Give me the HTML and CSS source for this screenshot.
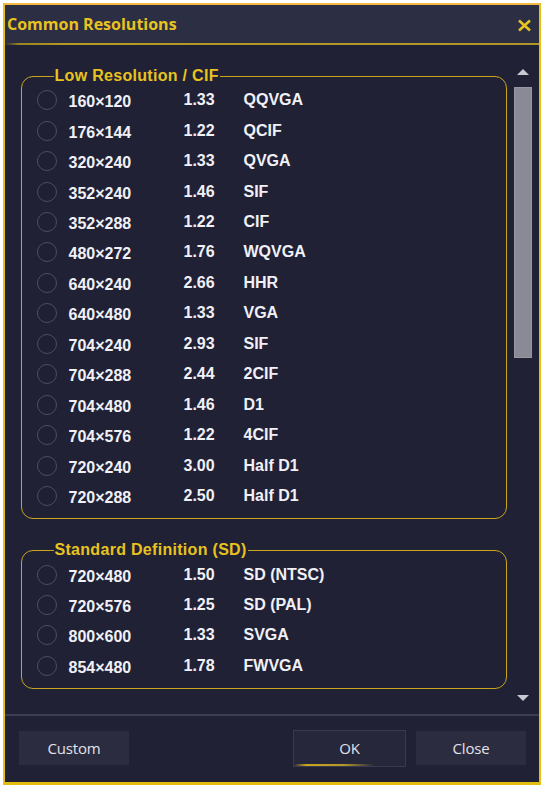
FILE: index.html
```html
<!DOCTYPE html>
<html>
<head>
<meta charset="utf-8">
<link rel="stylesheet" href="styles.css">
</head>
<body>
<div class="dialog">
  <div class="titlebar">
    <span class="title">Common Resolutions</span>
    <svg class="close-x" width="15" height="13" viewBox="0 0 15 13"><path d="M2 1.5 L13 11.5 M13 1.5 L2 11.5" stroke="#e8c31f" stroke-width="2.6" stroke-linecap="butt"/></svg>
  </div>
  <div class="title-sep"></div>
  <div class="content">
    <div class="scroll-area">
      <fieldset class="group">
        <legend>Low Resolution / CIF</legend>
        <div class="row"><span class="radio"></span><span class="res">160×120</span><span class="ar">1.33</span><span class="nm">QQVGA</span></div>
        <div class="row"><span class="radio"></span><span class="res">176×144</span><span class="ar">1.22</span><span class="nm">QCIF</span></div>
        <div class="row"><span class="radio"></span><span class="res">320×240</span><span class="ar">1.33</span><span class="nm">QVGA</span></div>
        <div class="row"><span class="radio"></span><span class="res">352×240</span><span class="ar">1.46</span><span class="nm">SIF</span></div>
        <div class="row"><span class="radio"></span><span class="res">352×288</span><span class="ar">1.22</span><span class="nm">CIF</span></div>
        <div class="row"><span class="radio"></span><span class="res">480×272</span><span class="ar">1.76</span><span class="nm">WQVGA</span></div>
        <div class="row"><span class="radio"></span><span class="res">640×240</span><span class="ar">2.66</span><span class="nm">HHR</span></div>
        <div class="row"><span class="radio"></span><span class="res">640×480</span><span class="ar">1.33</span><span class="nm">VGA</span></div>
        <div class="row"><span class="radio"></span><span class="res">704×240</span><span class="ar">2.93</span><span class="nm">SIF</span></div>
        <div class="row"><span class="radio"></span><span class="res">704×288</span><span class="ar">2.44</span><span class="nm">2CIF</span></div>
        <div class="row"><span class="radio"></span><span class="res">704×480</span><span class="ar">1.46</span><span class="nm">D1</span></div>
        <div class="row"><span class="radio"></span><span class="res">704×576</span><span class="ar">1.22</span><span class="nm">4CIF</span></div>
        <div class="row"><span class="radio"></span><span class="res">720×240</span><span class="ar">3.00</span><span class="nm">Half D1</span></div>
        <div class="row"><span class="radio"></span><span class="res">720×288</span><span class="ar">2.50</span><span class="nm">Half D1</span></div>
      </fieldset>
      <fieldset class="group group-sd">
        <legend>Standard Definition (SD)</legend>
        <div class="row"><span class="radio"></span><span class="res">720×480</span><span class="ar">1.50</span><span class="nm">SD (NTSC)</span></div>
        <div class="row"><span class="radio"></span><span class="res">720×576</span><span class="ar">1.25</span><span class="nm">SD (PAL)</span></div>
        <div class="row"><span class="radio"></span><span class="res">800×600</span><span class="ar">1.33</span><span class="nm">SVGA</span></div>
        <div class="row"><span class="radio"></span><span class="res">854×480</span><span class="ar">1.78</span><span class="nm">FWVGA</span></div>
      </fieldset>
    </div>
    <div class="scrollbar">
      <span class="arrow-up"></span>
      <span class="thumb"></span>
      <span class="spacer"></span>
      <span class="arrow-down"></span>
    </div>
  </div>
  <div class="footer-sep"></div>
  <div class="footer">
    <button class="btn btn-custom">Custom</button>
    <span class="spacer"></span>
    <button class="btn btn-ok">OK</button>
    <button class="btn btn-close">Close</button>
  </div>
</div>
</body>
</html>
```
FILE: styles.css
```css
html, body {
  margin: 0;
  padding: 0;
  background: #ffffff;
}
body {
  padding: 3px 0 0 3px;
}
.dialog {
  box-sizing: border-box;
  width: 538px;
  height: 782px;
  border-top: 2px solid #f4b843;
  border-left: 2px solid #e9bd22;
  border-right: 2px solid #e6bf14;
  border-bottom: 3px solid #e2bd10;
  background: #202135;
  display: flex;
  flex-direction: column;
}
.titlebar {
  height: 38px;
  background: #2c2e43;
  display: flex;
  align-items: center;
  justify-content: space-between;
  padding: 0 7px 0 2px;
  flex: none;
}
.title {
  font-family: "Open Sans", "Noto Sans", sans-serif;
  font-weight: 700;
  font-size: 16px;
  color: #e8c31f;
}
.close-x {
  display: block;
  margin-top: 2px;
}
.title-sep {
  height: 2px;
  flex: none;
  background: linear-gradient(to right, #2a2b3a 0px, #9c8420 14px, #b59a22 60px, #b0962a 100%);
}
.content {
  flex: none;
  height: 669px;
  display: flex;
}
.scroll-area {
  width: 504px;
  box-sizing: border-box;
  padding: 23px 2px 0 16px;
}
.group {
  margin: 0;
  width: 486px;
  box-sizing: border-box;
  border: 1.5px solid #c9a51d;
  border-radius: 12px;
  padding: 1px 0 7px 14.5px;
  min-width: 0;
}
.group-sd {
  margin-top: 23px;
}
.group legend {
  font-family: "Liberation Sans", Arial, sans-serif;
  font-weight: 700;
  font-size: 16px;
  line-height: 16px;
  letter-spacing: 0.3px;
  color: #e8c31f;
  padding: 0 1px;
  margin-left: 17px;
}
.row {
  height: 30.46px;
  display: flex;
  align-items: center;
  font-family: "Liberation Sans", Arial, sans-serif;
  font-weight: 700;
  font-size: 16px;
  color: #f0f0f6;
}
.radio {
  box-sizing: border-box;
  width: 20px;
  height: 20px;
  border-radius: 50%;
  border: 1.6px solid #4d4e61;
  background: #1f2033;
  flex: none;
  margin-right: 12px;
}
.res {
  width: 115px;
  flex: none;
  margin-top: 4px;
}
.ar {
  width: 60px;
  flex: none;
}
.nm {
  flex: none;
}
.scrollbar {
  flex: 1;
  display: flex;
  flex-direction: column;
  padding: 24px 7px 13px 5px;
}
.arrow-up, .arrow-down {
  width: 0;
  height: 0;
  align-self: center;
  border-left: 6.5px solid transparent;
  border-right: 6.5px solid transparent;
}
.arrow-up {
  border-bottom: 6px solid #c9c9d2;
}
.arrow-down {
  border-top: 6px solid #c9c9d2;
}
.thumb {
  margin-top: 12px;
  height: 271px;
  box-sizing: border-box;
  background: #8a8a97;
  border: 1px solid #9898a4;
}
.spacer {
  flex: 1;
}
.footer-sep {
  height: 2px;
  flex: none;
  background: #3c3d52;
}
.footer {
  flex: 1;
  display: flex;
  align-items: center;
  padding: 0 13px 2px 14px;
  gap: 10px;
}
.btn {
  box-sizing: border-box;
  height: 34px;
  background: #2b2c40;
  border: none;
  color: #e2e2ea;
  font-family: "Open Sans", "Noto Sans", sans-serif;
  font-size: 15px;
  letter-spacing: -0.2px;
  padding: 0;
}
.btn-custom {
  width: 110px;
}
.btn-ok {
  width: 113px;
  height: 37px;
  background: #26273b;
  border: 1px solid #393a4e;
  background-image: linear-gradient(to right, #26273b 0, #c9a51d 12px, #b5962a 50px, #26273b 80px);
  background-size: 100% 2px;
  background-repeat: no-repeat;
  background-position: 0 100%;
}
.btn-close {
  width: 110px;
}
```
